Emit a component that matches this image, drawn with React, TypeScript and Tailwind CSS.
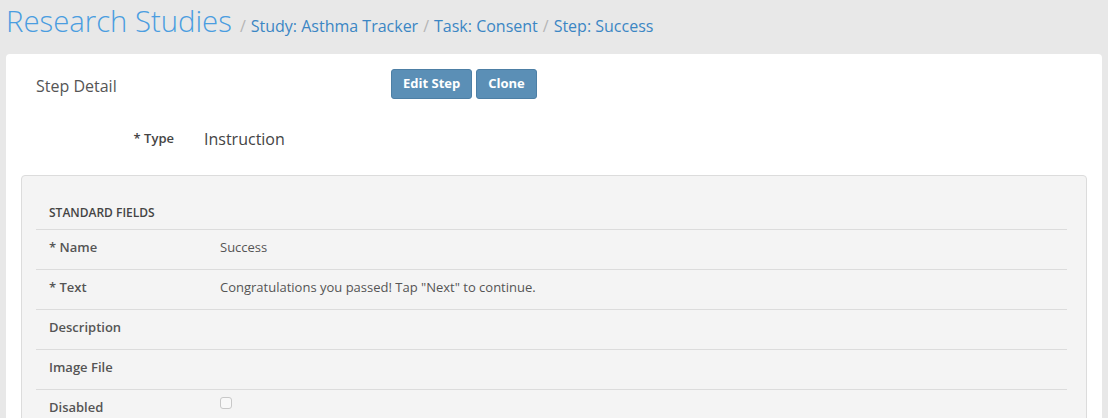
const rows: { label: string; value?: string; checkbox?: boolean }[] = [
  { label: '* Name', value: 'Success' },
  { label: '* Text', value: 'Congratulations you passed! Tap "Next" to continue.' },
  { label: 'Description' },
  { label: 'Image File' },
  { label: 'Disabled', checkbox: true },
]

export default function App() {
  return (
    <div className="min-h-[418px] w-full bg-[#e8e8e8] font-['Open_Sans',sans-serif] overflow-hidden">
      <header className="flex h-[54px] items-baseline pl-[6px] pt-[1px]">
        <h1 className="text-[29.3px] font-light leading-[40px] text-[#4a9de0]">Research Studies</h1>
        <nav className="ml-[8px] flex items-baseline gap-[5px] text-[16px] text-[#3b86c4]">
          <span className="text-[#b5b5b5]">/</span>
          <span>Study: Asthma Tracker</span>
          <span className="text-[#b5b5b5]">/</span>
          <span>Task: Consent</span>
          <span className="text-[#b5b5b5]">/</span>
          <span>Step: Success</span>
        </nav>
      </header>

      <main className="mx-[6px] rounded-[4px] bg-white pb-10">
        <div className="flex items-center pl-[30px] pt-[15px]">
          <h2 className="w-[355px] pt-[4px] text-[16px] text-[#555]">Step Detail</h2>
          <div className="flex gap-[4px]">
            <button className="h-[30px] rounded-[3px] border border-[#4d7fa5] bg-[#5b8fb6] px-[11px] text-[13px] font-bold text-white">
              Edit Step
            </button>
            <button className="h-[30px] rounded-[3px] border border-[#4d7fa5] bg-[#5b8fb6] px-[11px] text-[13px] font-bold text-white">
              Clone
            </button>
          </div>
        </div>

        <div className="mt-[28px] flex items-center">
          <span className="w-[168px] text-right text-[13px] font-semibold text-[#444]">* Type</span>
          <span className="ml-[30px] text-[16px] text-[#444]">Instruction</span>
        </div>

        <section className="mx-[15px] mt-[24px] rounded-[4px] border border-[#dcdcdc] bg-[#f4f4f4] pb-10 pl-[14px] pr-[19px] pt-[28px]">
          <h3 className="pb-[7px] pl-[13px] text-[12px] font-semibold uppercase text-[#444]">Standard Fields</h3>
          {rows.map(r => (
            <div key={r.label} className="flex h-[40px] items-center border-t border-[#dcdcdc] pb-[4px] pl-[13px]">
              <span className="w-[171px] text-[13px] font-semibold text-[#555]">{r.label}</span>
              {r.value && <span className="text-[13px] text-[#555]">{r.value}</span>}
              {r.checkbox && (
                <span className="mb-[10px] h-[12px] w-[12px] rounded-[3px] border border-[#c8c8c8] bg-[#f8f8f8]" />
              )}
            </div>
          ))}
        </section>
      </main>
    </div>
  )
}
